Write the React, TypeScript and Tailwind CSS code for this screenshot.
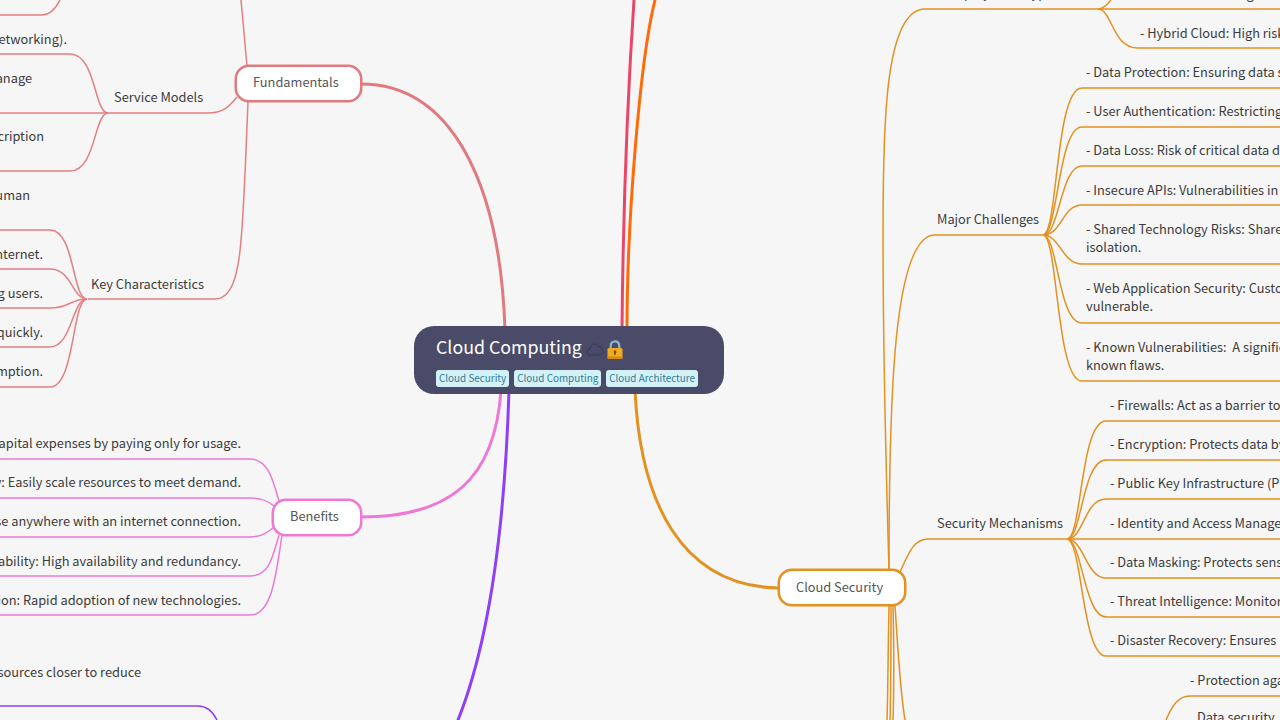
import type { ReactNode } from "react";

const font = "font-['Noto_Sans_CJK_SC','Noto_Sans',sans-serif]";

// text on a branch of the map, placed on the canvas
function Label({ className, children }: { className: string; children: ReactNode }) {
  return (
    <div className={`absolute whitespace-nowrap text-[12.8px] leading-[18.5px] text-[#3b3b3b] ${className}`}>
      {children}
    </div>
  );
}

// list of leaves hanging off one hub, rows are 39px apart
function Leaves({ className, rows }: { className: string; rows: ReactNode[] }) {
  return (
    <div className={`absolute flex flex-col gap-[20.75px] whitespace-nowrap text-[12.8px] leading-[18.5px] text-[#3b3b3b] ${className}`}>
      {rows.map((row, i) => (
        <div key={i}>{row}</div>
      ))}
    </div>
  );
}

// white pill for second level topics
function Topic({ className, children }: { className: string; children: ReactNode }) {
  return (
    <div
      className={`absolute flex h-[37px] items-center rounded-[14px] border-2 bg-white pl-[16px] text-[12.8px] text-[#555555] ring-[0.5px] ${className}`}
    >
      {children}
    </div>
  );
}

function Tag({ children }: { children: ReactNode }) {
  return (
    <span className="flex h-[17px] items-center whitespace-nowrap rounded-[3px] bg-[#d5f1f8] px-[3px] text-[9.9px] text-[#2b7d95]">
      {children}
    </span>
  );
}

function Lines() {
  return (
    <svg className="absolute inset-0" width="1280" height="720" viewBox="0 0 1280 720" fill="none">
      {/* main branches */}
      <g strokeWidth="3" strokeLinecap="round">
        <path d="M361 84C450 84 500 180 505 330" stroke="#e07a7e" />
        <path d="M361 517C450 517 495 480 501 390" stroke="#ee78d6" />
        <path d="M509 390C505 520 490 640 458 720" stroke="#8f3ff5" />
        <path d="M622 330C623 220 628 90 634 0" stroke="#e8476a" />
        <path d="M627 330C627 220 640 60 655 0" stroke="#ff6b0a" />
        <path d="M635 390C640 500 680 586 778 588" stroke="#e39120" />
      </g>
      {/* fundamentals */}
      <g stroke="#e57f80" strokeWidth="1.5">
        <path d="M247 66C245 45 243 20 241 0" />
        <path d="M237 97C228 108 222 113 208 113H108" />
        <path d="M248 102C246 150 244 210 241 240C238 280 230 299 215 299H88" />
        <path d="M108 113C94 113 96 54 70 54H0" />
        <path d="M108 113H0" />
        <path d="M108 113C94 113 96 171 70 171H0" />
        <path d="M60 0C55 10 50 15 42 15H0" />
        <path d="M87 299C72 299 75 230 50 230H0" />
        <path d="M87 299C72 299 72 269 50 269H0" />
        <path d="M87 299C70 299 70 308 50 308H0" />
        <path d="M87 299C72 299 72 347 50 347H0" />
        <path d="M87 299C72 299 75 387 50 387H0" />
      </g>
      {/* benefits */}
      <g stroke="#ee78d6" strokeWidth="1.5">
        <path d="M279 501C273 480 268 459 250 459H0" />
        <path d="M274 506C268 501 262 498 250 498H0" />
        <path d="M274 527C268 532 262 537 250 537H0" />
        <path d="M279 535C273 555 270 576 250 576H0" />
        <path d="M282 535C276 575 272 615 250 615H0" />
      </g>
      {/* purple leaf */}
      <path d="M0 706H198C208 706 213 712 217 720" stroke="#8f3ff5" strokeWidth="1.5" />
      {/* cloud security */}
      <g stroke="#e39120" strokeWidth="1.5">
        <path d="M889 570C884 400 883 300 883 233C883 130 884 9 925 9H1098" />
        <path d="M889 570C889 400 893 235 935 235H1043" />
        <path d="M900 572C908 555 913 539 928 539H1067" />
        <path d="M889 606C888 650 888 690 887 720" />
        <path d="M891 606C891 650 891 690 890 720" />
        <path d="M893 606C894 650 894 690 893 720" />
        <path d="M895 606C898 650 900 690 905 720" />
        <path d="M1098 9C1103 9 1107 5 1111 0" />
        <path d="M1098 9H1280" />
        <path d="M1098 9C1112 9 1112 48 1138 48H1280" />
        <path d="M1043 235C1058 235 1055 88 1082 88H1280" />
        <path d="M1043 235C1058 235 1058 127 1082 127H1280" />
        <path d="M1043 235C1060 235 1060 166 1082 166H1280" />
        <path d="M1043 235C1062 235 1062 205 1082 205H1280" />
        <path d="M1043 235C1060 235 1062 264 1082 264H1280" />
        <path d="M1043 235C1058 235 1058 323 1082 323H1280" />
        <path d="M1043 235C1058 235 1056 381 1082 381H1280" />
        <path d="M1067 539C1082 539 1080 421 1106 421H1280" />
        <path d="M1067 539C1082 539 1082 460 1106 460H1280" />
        <path d="M1067 539C1084 539 1084 499 1106 499H1280" />
        <path d="M1067 539H1280" />
        <path d="M1067 539C1084 539 1086 578 1106 578H1280" />
        <path d="M1067 539C1082 539 1084 617 1106 617H1280" />
        <path d="M1067 539C1082 539 1082 656 1106 656H1280" />
        <path d="M1166 720C1172 706 1178 696 1190 696H1280" />
      </g>
    </svg>
  );
}

function CloudIcon() {
  return (
    <svg width="18" height="14" viewBox="0 0 18 14" fill="none" stroke="#383950" strokeWidth="1">
      <path d="M4.5 13C2.5 13 1 11.7 1 10C1 8.5 2.2 7.3 3.8 7.2C4 4.5 5.8 2 8.3 2C10.2 2 11.6 3.2 12.1 4.8C12.4 4.7 12.7 4.7 13 4.7C14.8 4.7 16 6 16.1 7.6C16.9 8 17.4 8.9 17.4 9.9C17.4 11.7 16 13 14.2 13H4.5Z" />
    </svg>
  );
}

function LockIcon() {
  return (
    <svg width="16" height="19" viewBox="0 0 16 19" fill="none">
      <path d="M3.7 9V6C3.7 3 5.5 1.3 8 1.3C10.5 1.3 12.3 3 12.3 6V9" stroke="#8fb5c8" strokeWidth="2.2" />
      <rect x="0.5" y="8" width="15" height="11" rx="1.5" fill="#f3ab1f" />
      <rect x="0.5" y="16.5" width="15" height="2.5" rx="1.2" fill="#d68a12" />
      <circle cx="8" cy="12" r="1.4" fill="#6f4a0c" />
      <rect x="7.3" y="12" width="1.4" height="3" fill="#6f4a0c" />
    </svg>
  );
}

export default function App() {
  return (
    <div className={`relative h-[720px] w-[1280px] overflow-hidden bg-[#f6f6f6] ${font}`}>
      <Lines />

      {/* root */}
      <div className="absolute left-[414px] top-[326px] flex h-[68px] w-[310px] flex-col rounded-[20px] bg-[#4a4b68] px-[22px] pt-[7px]">
        <div className="flex h-[27px] items-center text-[17.8px] leading-[27px] text-white">
          <span>Cloud Computing</span>
          <span className="ml-[4px] mt-[4px]">
            <CloudIcon />
          </span>
          <span className="ml-[3px] mt-[6px]">
            <LockIcon />
          </span>
        </div>
        <div className="mt-[10px] flex gap-[5px]">
          <Tag>Cloud Security</Tag>
          <Tag>Cloud Computing</Tag>
          <Tag>Cloud Architecture</Tag>
        </div>
      </div>

      <Topic className="left-[235px] top-[65px] w-[127px] border-[#e07a7e] pb-[3px] ring-[#e07a7e]">Fundamentals</Topic>
      <Topic className="left-[272px] top-[499px] w-[90px] border-[#ee78d6] pb-[3px] ring-[#ee78d6]">Benefits</Topic>
      <Topic className="left-[778px] top-[569px] w-[128px] border-[#e39120] pb-[2px] ring-[#e39120]">Cloud Security</Topic>

      {/* left side */}
      <Label className="left-[114px] top-[88px]">Service Models</Label>
      <Label className="left-[91px] top-[275px]">Key Characteristics</Label>
      <Leaves
        className="right-[1213px] top-[29.8px] items-end"
        rows={[
          "- IaaS: Provides virtualized computing resources (networking).",
          <span className="mr-[35px] block pb-[19px]">- PaaS: Platform to build and manage</span>,
          <span className="mr-[23px] block pb-[19px]">- SaaS: Software delivered by subscription</span>,
          <span className="mr-[37px] block pb-[19px]">- On-demand: Without human</span>,
        ]}
      />
      <Leaves
        className="right-[1237px] top-[244.6px] items-end"
        rows={[
          "- Broad Access: Available over the internet.",
          "- Resource Pooling: Supporting users.",
          "- Rapid Elasticity: Scale quickly.",
          "- Measured Service: Tracks consumption.",
        ]}
      />
      <Leaves
        className="right-[1039px] top-[433.8px] items-end"
        rows={[
          "- Cost Efficiency: Reduces capital expenses by paying only for usage.",
          "- Scalability: Easily scale resources to meet demand.",
          "- Accessibility: Use anywhere with an internet connection.",
          "- Reliability: High availability and redundancy.",
          "- Innovation: Rapid adoption of new technologies.",
        ]}
      />
      <Label className="right-[1139px] top-[663px]">- Edge Computing: Bringing resources closer to reduce</Label>

      {/* right side */}
      <Label className="left-[948px] top-[-16px]">Deployment Types</Label>
      <Label className="left-[1140px] top-[-15px]">- Private Cloud: High risk</Label>
      <Label className="left-[1140px] top-[24px]">- Hybrid Cloud: High risk</Label>
      <Label className="left-[937px] top-[210px]">Major Challenges</Label>
      <Label className="left-[937px] top-[514px]">Security Mechanisms</Label>

      <Leaves
        className="left-[1086px] top-[62.8px]"
        rows={[
          "- Data Protection: Ensuring data security",
          "- User Authentication: Restricting access",
          "- Data Loss: Risk of critical data deletion",
          "- Insecure APIs: Vulnerabilities in interfaces",
          <span className="block pb-[1px] pt-[0.2px]">
            - Shared Technology Risks: Shared resources
            <br />
            isolation.
          </span>,
          <span className="block pb-[1.2px]">
            - Web Application Security: Custom apps
            <br />
            vulnerable.
          </span>,
          <span className="block pb-[1.2px]">
            - Known Vulnerabilities:&nbsp; A significant risk
            <br />
            known flaws.
          </span>,
        ]}
      />
      <Leaves
        className="left-[1110px] top-[395.8px]"
        rows={[
          "- Firewalls: Act as a barrier to threats",
          "- Encryption: Protects data by encoding",
          "- Public Key Infrastructure (PKI)",
          "- Identity and Access Management",
          "- Data Masking: Protects sensitive data",
          "- Threat Intelligence: Monitors threats",
          <>- Disaster Recovery: Ensures&nbsp; business continuity</>,
        ]}
      />
      <Label className="left-[1190px] top-[671px]">- Protection against attacks</Label>
      <Label className="left-[1197px] top-[708px]">Data security</Label>
    </div>
  );
}
